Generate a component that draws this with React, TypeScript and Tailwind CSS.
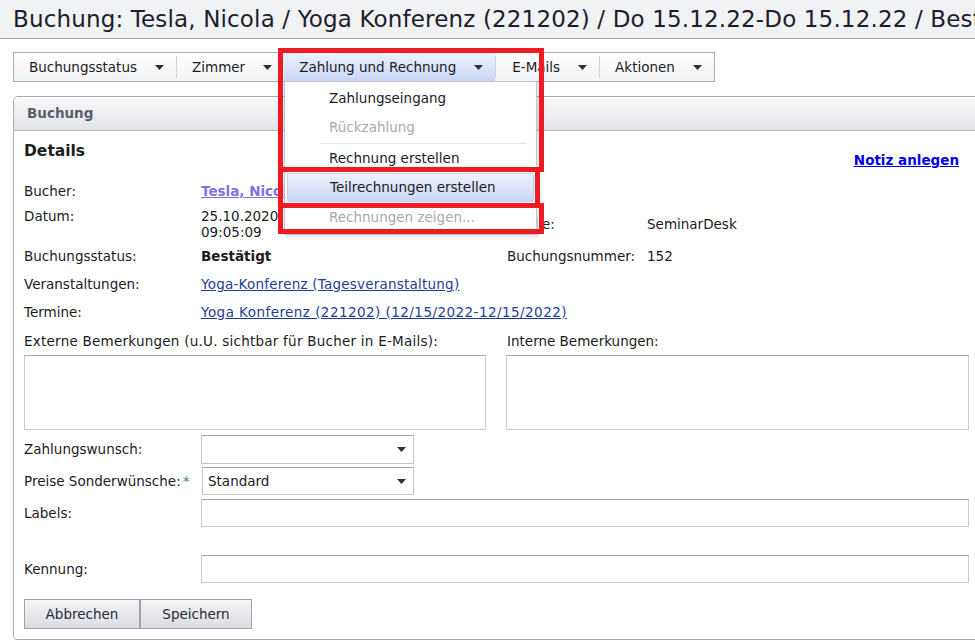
import React from "react";

function Caret({ className = "" }: { className?: string }) {
  return (
    <svg width="9" height="5" viewBox="0 0 9 5" className={className}>
      <path d="M0 0 H9 L4.5 5 Z" fill="#2f3136" />
    </svg>
  );
}

function ToolItem({ label, active = false, sep = true }: { label: string; active?: boolean; sep?: boolean }) {
  return (
    <div className="flex items-center h-full">
      <div
        className={
          "flex items-center h-full pl-[15px] pr-[12px] " +
          (active ? "bg-gradient-to-b from-[#eef2fd] to-[#c9d6f6]" : "")
        }
      >
        <span className="whitespace-nowrap">{label}</span>
        <Caret className="ml-[18px]" />
      </div>
      {sep && <div className="w-px h-[22px] bg-[#d3d5d9]" />}
    </div>
  );
}

export default function App() {
  return (
    <div className="relative w-[975px] h-[644px] overflow-hidden bg-white font-['DejaVu_Sans',sans-serif] text-[13.5px] text-[#1c1c24]">
      {/* Title bar */}
      <div className="h-[39px] bg-[#f1f2f4] border-b border-[#a7aab0] pl-[13px] text-[23px] leading-[38px] tracking-[0.15px] whitespace-nowrap overflow-hidden text-[#1d1d2c]">
        Buchung: Tesla, Nicola / Yoga Konferenz (221202) / Do 15.12.22-Do 15.12.22 / Bestätigt
      </div>

      {/* Toolbar */}
      <div className="pl-[13px] pt-[13px]">
        <div className="inline-flex items-center h-[30px] border border-[#a9adb3] bg-gradient-to-b from-white to-[#f1f2f4]">
          <ToolItem label="Buchungsstatus" />
          <ToolItem label="Zimmer" sep={false} />
          <ToolItem label="Zahlung und Rechnung" active />
          <div className="flex items-center h-full">
            <div className="flex items-center h-full pl-[16px] pr-[12px]">
              <span>E-Mails</span>
              <Caret className="ml-[18px]" />
            </div>
            <div className="w-px h-[22px] bg-[#d3d5d9]" />
          </div>
          <div className="flex items-center h-full pl-[15px] pr-[12px]">
            <span>Aktionen</span>
            <Caret className="ml-[18px]" />
          </div>
        </div>
      </div>

      {/* Panel */}
      <div className="ml-[13px] mt-[14px] w-[970px] border border-[#a9acb2] rounded-t-[5px] rounded-bl-[4px]">
        <div className="h-[34px] rounded-t-[5px] bg-gradient-to-b from-[#fafafb] to-[#e2e3e7] border-b border-[#b4b7bd] pl-[13px] flex items-center font-bold text-[#5a5f6c]">
          Buchung
        </div>
        <div className="pl-[10px] pr-[13px] pt-[10px] pb-[10px]">
          {/* Details header */}
          <div className="flex items-start justify-between h-[38px]">
            <div className="font-bold text-[15.5px] leading-[20px]">Details</div>
            <a className="mt-[11px] mr-[10px] leading-[16px] font-bold text-[#0000ee] underline">Notiz anlegen</a>
          </div>

          <div className="grid grid-cols-[177px_306px_140px_1fr] items-center">
            <div className="h-[24px] flex items-center pt-[1px]">Bucher:</div>
            <div className="h-[24px] flex items-center pt-[1px]">
              <a className="font-bold text-[#7f72e4] underline">Tesla, Nicola</a>
            </div>
            <div />
            <div />

            <div className="h-[42px] flex items-start pt-[5px] leading-[16px]">Datum:</div>
            <div className="h-[42px] flex items-center leading-[16px]">
              <span>
                25.10.2020
                <br />
                09:05:09
              </span>
            </div>
            <div className="h-[42px] flex items-center">Quelle:</div>
            <div className="h-[42px] flex items-center">SeminarDesk</div>

            <div className="h-[22px] flex items-center">Buchungsstatus:</div>
            <div className="h-[22px] flex items-center font-bold">Bestätigt</div>
            <div className="h-[22px] flex items-center">Buchungsnummer:</div>
            <div className="h-[22px] flex items-center">152</div>

            <div className="h-[34px] flex items-center">Veranstaltungen:</div>
            <div className="h-[34px] flex items-center col-span-3">
              <a className="text-[#1f3e93] underline whitespace-nowrap tracking-[0.22px]">Yoga-Konferenz (Tagesveranstaltung)</a>
            </div>

            <div className="h-[22px] flex items-center">Termine:</div>
            <div className="h-[22px] flex items-center col-span-3">
              <a className="text-[#1f3e93] underline whitespace-nowrap tracking-[0.45px]">Yoga Konferenz (221202) (12/15/2022-12/15/2022)</a>
            </div>
          </div>

          {/* Remarks */}
          <div className="grid grid-cols-[462px_463px] gap-x-[20px] mt-[10px]">
            <div className="leading-[16px] whitespace-nowrap tracking-[0.24px]">Externe Bemerkungen (u.U. sichtbar für Bucher in E-Mails):</div>
            <div className="leading-[16px] pl-[1px]">Interne Bemerkungen:</div>
            <div className="mt-[6px] h-[75px] border border-[#c9cbd0] border-t-[#a2a5ab] bg-white" />
            <div className="mt-[6px] h-[75px] border border-[#c9cbd0] border-t-[#a2a5ab] bg-white" />
          </div>

          {/* Form rows */}
          <div className="grid grid-cols-[177px_1fr] items-center mt-[5px]">
            <div>Zahlungswunsch:</div>
            <div className="w-[213px] h-[29px] border border-[#c3c5ca] border-t-[#a2a5ab] flex items-center justify-end pr-[7px]">
              <Caret />
            </div>
          </div>
          <div className="grid grid-cols-[177px_1fr] items-center mt-[3px]">
            <div className="whitespace-nowrap">
              Preise Sonderwünsche:<span className="text-[#3d8f76] ml-[2px]">*</span>
            </div>
            <div className="ml-[1px] w-[212px] h-[28px] border border-[#c3c5ca] border-t-[#a2a5ab] flex items-center justify-between pl-[5px] pr-[7px]">
              <span>Standard</span>
              <Caret />
            </div>
          </div>
          <div className="grid grid-cols-[177px_1fr] items-center mt-[4px]">
            <div>Labels:</div>
            <div className="h-[28px] border border-[#c9cbd0] border-t-[#a2a5ab]" />
          </div>
          <div className="grid grid-cols-[177px_1fr] items-center mt-[28px]">
            <div>Kennung:</div>
            <div className="h-[28px] border border-[#c9cbd0] border-t-[#a2a5ab]" />
          </div>

          <div className="flex mt-[16px]">
            <div className="w-[116px] h-[30px] border border-[#9ea2a9] bg-gradient-to-b from-[#f4f4f6] to-[#dcdde2] flex items-center justify-center text-[#2a2a38]">
              Abbrechen
            </div>
            <div className="w-[112px] h-[30px] border border-[#9ea2a9] bg-gradient-to-b from-[#f4f4f6] to-[#dcdde2] flex items-center justify-center text-[#2a2a38]">
              Speichern
            </div>
          </div>
        </div>
      </div>

      {/* Dropdown menu */}
      <div className="absolute left-[284px] top-[81px] w-[253px] bg-white border border-[#c2c5ca] pt-[1px] pb-[2px] shadow-[2px_2px_4px_rgba(0,0,0,0.12)]">
        <div className="h-[30px] flex items-center pl-[44px]">Zahlungseingang</div>
        <div className="h-[29px] flex items-center pl-[44px] text-[#a9a9ad]">Rückzahlung</div>
        <div className="h-[2px] flex items-center pl-[35px] pr-[10px]">
          <div className="h-px w-full bg-[#e2e3e7]" />
        </div>
        <div className="h-[29px] flex items-center pl-[44px]">Rechnung erstellen</div>
        <div className="h-[29px] mx-[2px] flex items-center pl-[42px] bg-gradient-to-b from-[#eef2fd] to-[#cbd7f6] border border-[#c4cfea] rounded-[2px]">
          Teilrechnungen erstellen
        </div>
        <div className="h-[30px] flex items-center pl-[44px] text-[#a9a9ad]">Rechnungen zeigen...</div>
      </div>

      {/* Red annotation boxes */}
      <div className="absolute left-[278px] top-[48px] w-[266px] h-[124px] border-[5px] border-[#ed1c24]" />
      <div className="absolute left-[278px] top-[167px] w-[262px] h-[41px] border-[5px] border-[#ed1c24]" />
      <div className="absolute left-[278px] top-[203px] w-[266px] h-[31px] border-[5px] border-[#ed1c24]" />
    </div>
  );
}
